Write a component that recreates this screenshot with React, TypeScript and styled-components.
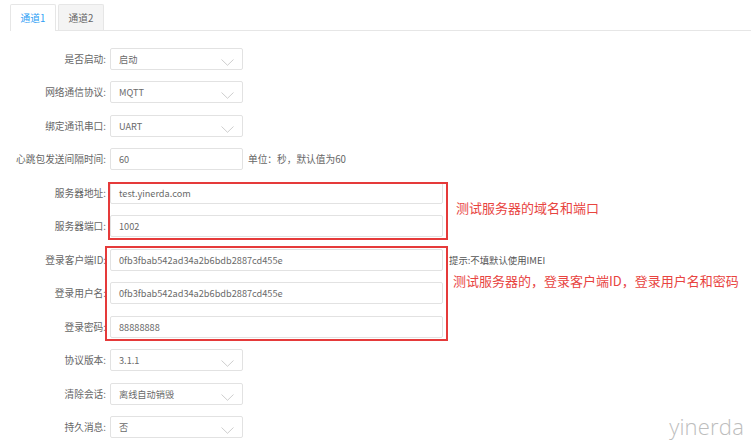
import styled, { createGlobalStyle } from 'styled-components'

const GlobalStyle = createGlobalStyle`
  html, body {
    margin: 0;
    padding: 0;
    background: #fff;
  }
  body {
    font-family: "Noto Sans CJK SC", "Noto Sans", sans-serif;
    color: #666;
  }
`

const Page = styled.div`
  position: relative;
  width: 751px;
  height: 445px;
  overflow: hidden;
`

const TabBar = styled.div`
  display: flex;
  gap: 2px;
  margin-left: 10px;
  padding-top: 4px;
  border-bottom: 1px solid #e6e6e6;
`

const Tab = styled.div<{ $active?: boolean }>`
  width: 46px;
  height: 26px;
  box-sizing: border-box;
  display: flex;
  align-items: center;
  justify-content: center;
  font-size: 9.7px;
  border: 1px solid #e6e6e6;
  border-bottom: none;
  border-radius: 2px 2px 0 0;
  margin-bottom: -1px;
  color: ${(p) => (p.$active ? '#2d9ef5' : '#666')};
  background: ${(p) => (p.$active ? '#fff' : '#f4f4f4')};
  ${(p) => (p.$active ? 'height: 27px;' : '')}
`

const Form = styled.div`
  padding-top: 11px;
`

const Row = styled.div`
  display: flex;
  align-items: center;
  height: 33.5px;
`

const Label = styled.div`
  width: 110px;
  padding-right: 4px;
  box-sizing: border-box;
  text-align: right;
  font-size: 9.7px;
  color: #666;
  white-space: nowrap;
`

const Field = styled.div<{ $wide?: boolean }>`
  position: relative;
  width: ${(p) => (p.$wide ? '333px' : '133px')};
  height: 22px;
  box-sizing: border-box;
  border: 1px solid #e2e2e2;
  border-radius: 2px;
  padding-left: 8px;
  display: flex;
  align-items: center;
  font-size: 9.2px;
  color: #6a6a6a;
  background: #fff;
`

const Arrow = styled.svg`
  position: absolute;
  right: 8px;
  top: 10px;
`

const Suffix = styled.span`
  margin-left: 5px;
  font-size: 9.7px;
  color: #666;
  white-space: nowrap;
`

const Hint = styled.span`
  margin-left: 6px;
  font-size: 9.4px;
  color: #555;
  white-space: nowrap;
`

const Group = styled.div`
  position: relative;
`

const Frame = styled.div<{ $left: number; $width: number; $top: number; $bottom: number }>`
  position: absolute;
  left: ${(p) => p.$left}px;
  width: ${(p) => p.$width}px;
  top: ${(p) => p.$top}px;
  bottom: ${(p) => p.$bottom}px;
  box-sizing: border-box;
  border: 2px solid #e53a3a;
  pointer-events: none;
`

const Note = styled.div<{ $left: number; $top: number }>`
  position: absolute;
  left: ${(p) => p.$left}px;
  top: ${(p) => p.$top}px;
  font-size: 13px;
  line-height: 16px;
  color: #e8443f;
  white-space: nowrap;
`

const Watermark = styled.div`
  position: absolute;
  right: 7px;
  bottom: 4px;
  font-family: "Open Sans", "Noto Sans", sans-serif;
  font-weight: 300;
  font-size: 22px;
  color: #bdbdbd;
  letter-spacing: 0.2px;
`

function Chevron() {
  return (
    <Arrow width="13" height="7" viewBox="0 0 13 7">
      <path d="M0.5 0.5 L6.5 6.3 L12.5 0.5" fill="none" stroke="#c8c8c8" strokeWidth="0.9" />
    </Arrow>
  )
}

function SelectRow({ label, value }: { label: string; value: string }) {
  return (
    <Row>
      <Label>{label}</Label>
      <Field>
        {value}
        <Chevron />
      </Field>
    </Row>
  )
}

function InputRow({ label, value, hint }: { label: string; value: string; hint?: string }) {
  return (
    <Row>
      <Label>{label}</Label>
      <Field $wide>{value}</Field>
      {hint && <Hint>{hint}</Hint>}
    </Row>
  )
}

export default function App() {
  return (
    <Page>
      <GlobalStyle />
      <TabBar>
        <Tab $active>通道1</Tab>
        <Tab>通道2</Tab>
      </TabBar>

      <Form>
        <SelectRow label="是否启动:" value="启动" />
        <SelectRow label="网络通信协议:" value="MQTT" />
        <SelectRow label="绑定通讯串口:" value="UART" />
        <Row>
          <Label>心跳包发送间隔时间:</Label>
          <Field>60</Field>
          <Suffix>单位：秒，默认值为60</Suffix>
        </Row>

        <Group>
          <InputRow label="服务器地址:" value="test.yinerda.com" />
          <InputRow label="服务器端口:" value="1002" />
          <Frame $left={108} $width={340} $top={6} $bottom={3} />
          <Note $left={456} $top={24}>测试服务器的域名和端口</Note>
        </Group>

        <Group>
          <InputRow
            label="登录客户端ID:"
            value="0fb3fbab542ad34a2b6bdb2887cd455e"
            hint="提示:不填默认使用IMEI"
          />
          <InputRow label="登录用户名:" value="0fb3fbab542ad34a2b6bdb2887cd455e" />
          <InputRow label="登录密码:" value="88888888" />
          <Frame $left={105} $width={343} $top={3} $bottom={3} />
          <Note $left={453} $top={30}>测试服务器的，登录客户端ID，登录用户名和密码</Note>
        </Group>

        <SelectRow label="协议版本:" value="3.1.1" />
        <SelectRow label="清除会话:" value="离线自动销毁" />
        <SelectRow label="持久消息:" value="否" />
      </Form>

      <Watermark>yinerda</Watermark>
    </Page>
  )
}
